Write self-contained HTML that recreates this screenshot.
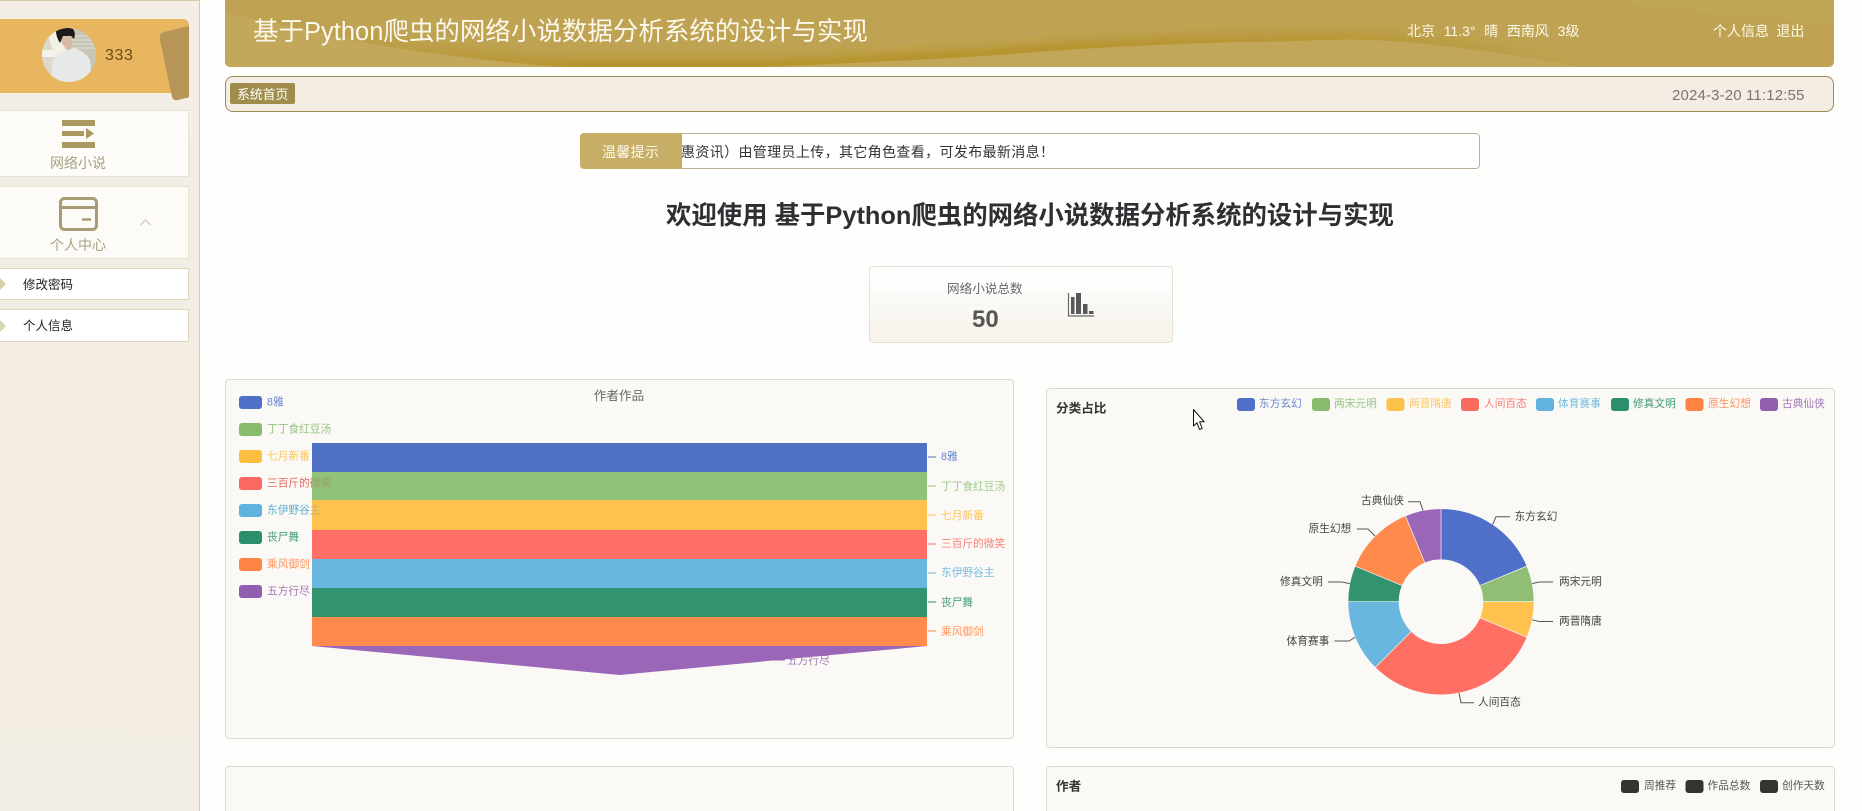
<!DOCTYPE html>
<html lang="zh-CN">
<head>
<meta charset="utf-8">
<title>基于Python爬虫的网络小说数据分析系统的设计与实现</title>
<style>
html,body{margin:0;padding:0;width:1862px;height:811px;overflow:hidden;background:#fefefd;font-family:"Liberation Sans","Noto Sans CJK SC",sans-serif;}
#root{position:relative;width:1862px;height:811px;overflow:hidden;}
.a{position:absolute;box-sizing:border-box;}
.t{position:absolute;white-space:nowrap;line-height:1;}
svg{position:absolute;left:0;top:0;}
svg text{font-family:"Liberation Sans","Noto Sans CJK SC",sans-serif;}
</style>
</head>
<body>
<div id="root">

<!-- sidebar -->
<div class="a" style="left:0;top:0;width:200px;height:811px;background:linear-gradient(180deg,#f3efe7 0%,#f3ede2 50%,#f3ede2 85%,#f2ede5 100%);border-right:1.5px solid #d8cba6;border-top:1px solid #d8cba6;"></div>
<div class="a" style="left:0;top:19px;width:189px;height:74px;background:#e8b65f;border-radius:0 6px 0 0;"></div>
<svg width="200" height="110" viewBox="0 0 200 110" style="z-index:2">
  <path d="M160 36Q160 33 164 32L189 26V96Q189 98 186 98L178 100Q173 101 172 97L160 40Z" fill="#b69557"/>
  <defs><clipPath id="av"><circle cx="69" cy="55" r="27"/></clipPath></defs>
  <g clip-path="url(#av)">
    <rect x="42" y="28" width="54" height="54" fill="#c7c6b6"/>
    <path d="M70 36H96M70 40H96M70 44H96M74 48H96" stroke="#d9d8cc" stroke-width="1.500"/>
    <rect x="42" y="28" width="18" height="54" fill="#ddd8c8"/>
    <rect x="42" y="50" width="16" height="7" fill="#f6f4ea"/>
    <path d="M48 36L60 28L66 50L58 66Z" fill="#f3f0e6"/>
    <path d="M50 82L53 60Q56 54 66 50L74 48Q86 52 90 60L92 82Z" fill="#e6e9e7"/>
    <path d="M60 38L72 37Q73 46 69 50Q63 48 60 38Z" fill="#d9b8a4"/>
    <path d="M56 31Q64 26 73 29Q76 33 74 39L71 36L63 36L60 43Q56 37 56 31Z" fill="#1c1a1a"/>
  </g>
</svg>
<div class="t" style="left:105px;top:48px;font-size:16px;color:#6b4a1c;letter-spacing:.6px;z-index:3;">333</div>

<div class="a" style="left:0;top:110px;width:189px;height:67px;background:#fdfcf9;border:1px solid #e8e2cf;border-left:0;"></div>
<div class="a" style="left:62px;top:120px;width:33px;height:5.5px;background:#ab9a5f;"></div>
<div class="a" style="left:62px;top:131px;width:22px;height:5px;background:#ab9a5f;"></div>
<div class="a" style="left:62px;top:142px;width:33px;height:5.5px;background:#ab9a5f;"></div>
<svg width="200" height="350" viewBox="0 0 200 350" style="z-index:2">
  <polygon points="86,128 94,133.500 86,139" fill="#ab9a5f"/>
</svg>
<div class="t" style="left:50px;top:156px;font-size:14px;color:#a9a184;">网络小说</div>

<div class="a" style="left:0;top:186px;width:189px;height:73px;background:#fcfbf7;border:1px solid #e8e2cf;border-left:0;"></div>
<svg width="200" height="350" viewBox="0 0 200 350" style="z-index:2">
  <rect x="60.500" y="198.500" width="36" height="31" rx="4" fill="none" stroke="#a89c72" stroke-width="3"/>
  <path d="M60 207.500H97" stroke="#a89c72" stroke-width="3"/>
  <path d="M82 219.500H91" stroke="#a89c72" stroke-width="2.500"/>
  <path d="M140.500 225L145.500 220L150.500 225" fill="none" stroke="#c9c2a8" stroke-width="1"/>
</svg>
<div class="t" style="left:50px;top:238px;font-size:14px;color:#a9a184;">个人中心</div>

<div class="a" style="left:0;top:268px;width:189px;height:32px;background:#fff;border:1px solid #ddd5bc;border-left:0;"></div>
<div class="a" style="left:0;top:309px;width:189px;height:33px;background:#fff;border:1px solid #ddd5bc;border-left:0;"></div>
<svg width="200" height="350" viewBox="0 0 200 350" style="z-index:2">
  <polygon points="0,278 6,284 0,290" fill="#d8cfa8"/>
  <polygon points="0,320 6,326 0,332" fill="#d8d6b0"/>
</svg>
<div class="t" style="left:23px;top:279px;font-size:12.5px;color:#222;">修改密码</div>
<div class="t" style="left:23px;top:320px;font-size:12.5px;color:#222;">个人信息</div>

<!-- header -->
<svg width="1862" height="70" viewBox="0 0 1862 70" style="z-index:1">
  <defs>
    <clipPath id="hd"><path d="M225 0H1834V61Q1834 67 1828 67H231Q225 67 225 61Z"/></clipPath>
    <clipPath id="up"><path d="M225 0V13C290 26 340 38 378 45C430 54 500 62 562 67H760C860 63 960 58 1025 53C1100 47 1200 42 1286 41.500C1320 40 1350 39 1365 40C1410 40 1500 52 1579 67H1834V0Z"/></clipPath>
    <filter id="bl" x="-5%" y="-100%" width="110%" height="300%"><feGaussianBlur stdDeviation="6"/></filter>
    <linearGradient id="sw" gradientUnits="userSpaceOnUse" x1="225" y1="0" x2="1600" y2="0">
      <stop offset="0" stop-color="#b28d1e" stop-opacity="0"/>
      <stop offset=".1" stop-color="#b28d1e" stop-opacity=".25"/>
      <stop offset=".27" stop-color="#b28d1e" stop-opacity="1"/>
      <stop offset=".62" stop-color="#b28d1e" stop-opacity="1"/>
      <stop offset=".85" stop-color="#b28d1e" stop-opacity=".6"/>
      <stop offset=".98" stop-color="#b28d1e" stop-opacity=".1"/>
      <stop offset="1" stop-color="#b28d1e" stop-opacity="0"/>
    </linearGradient>
  </defs>
  <g clip-path="url(#hd)">
    <rect x="225" y="0" width="1609" height="67" fill="#bfa353"/>
    <path d="M225 67V13C290 26 340 38 378 45C430 54 500 62 562 67Z" fill="#c3a85b"/>
    <path d="M760 67C860 63 960 58 1025 53C1100 47 1200 42 1286 41.500C1320 40 1350 39 1365 40C1410 40 1500 52 1579 67Z" fill="#c2a75b"/>
    <g clip-path="url(#up)">
      <path d="M225 13C290 26 340 38 378 45C430 54 500 62 562 67H760C860 63 960 58 1025 53C1100 47 1200 42 1286 41.500C1320 40 1350 39 1365 40C1410 40 1500 52 1579 67" fill="none" stroke="url(#sw)" stroke-width="12" filter="url(#bl)"/>
    </g>
    <path d="M1610 0C1680 12 1760 16 1834 24V0Z" fill="#c0a658" opacity=".6"/>
  </g>
</svg>
<div class="t" style="left:253px;top:20px;font-size:25.5px;color:#fbf8ee;z-index:2;">基于Python爬虫的网络小说数据分析系统的设计与实现</div>
<div class="t" style="left:1407px;top:24px;font-size:14px;color:#fdf9ea;z-index:2;word-spacing:4.8px;">北京 11.3° 晴 西南风 3级</div>
<div class="t" style="left:1713px;top:24px;font-size:14px;color:#fdf9ea;z-index:2;word-spacing:3.5px;">个人信息 退出</div>

<!-- breadcrumb -->
<div class="a" style="left:225px;top:76px;width:1609px;height:36px;background:#f3ede4;border:1px solid #9c8a55;border-radius:8px;"></div>
<div class="a" style="left:230px;top:83px;width:65px;height:21px;background:#a08c4b;border-radius:2px;"></div>
<div class="t" style="left:237px;top:88px;font-size:13px;color:#fff;letter-spacing:-.2px;">系统首页</div>
<div class="t" style="left:1672px;top:88px;font-size:15px;color:#7a7570;letter-spacing:.15px;">2024-3-20 11:12:55</div>

<!-- notice -->
<div class="a" style="left:675px;top:133px;width:805px;height:36px;background:#fff;border:1px solid #bdb193;border-radius:4px;"></div>
<div class="a" style="left:580px;top:133px;width:102px;height:36px;background:#c7ae66;border-radius:4px 0 0 4px;"></div>
<div class="t" style="left:602px;top:145px;font-size:14px;color:#fdf9ee;letter-spacing:.3px;">温馨提示</div>
<div class="t" style="left:681px;top:145px;font-size:14px;color:#333;letter-spacing:.36px;">惠资讯）由管理员上传，其它角色查看，可发布最新消息！</div>

<!-- heading -->
<div class="t" style="left:666px;top:204px;font-size:25.4px;font-weight:700;color:#2d2f33;">欢迎使用 基于Python爬虫的网络小说数据分析系统的设计与实现</div>

<!-- stat card -->
<div class="a" style="left:869px;top:266px;width:304px;height:77px;border:1px solid #e6e1d6;border-radius:4px;background:linear-gradient(180deg,#ffffff 0%,#fefefd 25%,#fbf9f6 40%,#faf8f4 60%,#f8f3eb 78%,#f8f3eb 100%);"></div>
<div class="t" style="left:947px;top:283px;font-size:12.6px;color:#666;">网络小说总数</div>
<div class="t" style="left:972px;top:308px;font-size:24px;font-weight:700;color:#555;">50</div>

<!-- chart cards -->
<div class="a" style="left:225px;top:379px;width:789px;height:360px;background:#faf9f5;border:1px solid #dcdad3;border-radius:4px;"></div>
<div class="a" style="left:1046px;top:388px;width:789px;height:360px;background:#faf9f5;border:1px solid #dcdad3;border-radius:4px;"></div>
<div class="a" style="left:225px;top:766px;width:789px;height:60px;background:#faf9f5;border:1px solid #dcdad3;border-radius:4px;"></div>
<div class="a" style="left:1046px;top:766px;width:789px;height:60px;background:#faf9f5;border:1px solid #dcdad3;border-radius:4px;"></div>

<svg width="1862" height="811" viewBox="0 0 1862 811" style="z-index:2">
  <!-- stat icon -->
  <path d="M1068.500 293V316H1094" fill="none" stroke="#6a6a6a" stroke-width="1.200"/>
  <rect x="1071" y="297" width="3.500" height="17" fill="#56585a"/>
  <rect x="1076" y="293" width="5" height="21" fill="#56585a"/>
  <rect x="1083" y="304" width="4.500" height="10" fill="#56585a"/>
  <rect x="1089" y="311" width="4.500" height="3" fill="#56585a"/>

  <!-- funnel legend -->
  <rect x="239" y="396" width="23" height="13" rx="3" fill="#4f6fc9"/>
  <rect x="239" y="423" width="23" height="13" rx="3" fill="#87bb6e"/>
  <rect x="239" y="450" width="23" height="13" rx="3" fill="#fdbd41"/>
  <rect x="239" y="477" width="23" height="13" rx="3" fill="#fa6a60"/>
  <rect x="239" y="504" width="23" height="13" rx="3" fill="#5fb3dd"/>
  <rect x="239" y="531" width="23" height="13" rx="3" fill="#2a8f6a"/>
  <rect x="239" y="558" width="23" height="13" rx="3" fill="#ff8444"/>
  <rect x="239" y="585" width="23" height="13" rx="3" fill="#925fb0"/>
  <g font-size="10.7" opacity=".85">
    <text x="267" y="405.500" fill="#4f6fc9">8雅</text>
    <text x="267" y="432.500" fill="#87bb6e">丁丁食红豆汤</text>
    <text x="267" y="459.500" fill="#fdbd41">七月新番</text>
    <text x="267" y="486.500" fill="#fa6a60">三百斤的微笑</text>
    <text x="267" y="513.500" fill="#5fb3dd">东伊野谷主</text>
    <text x="267" y="540.500" fill="#2a8f6a">丧尸舞</text>
    <text x="267" y="567.500" fill="#ff8444">乘风御剑</text>
    <text x="267" y="594.500" fill="#925fb0">五方行尽</text>
  </g>
  <text x="787" y="664" font-size="10.7" fill="#9268ac" opacity=".85">五方行尽</text>
  <path d="M770 660H785" stroke="#9c67b8" stroke-width="1"/>
  <!-- funnel -->
  <rect x="312" y="443" width="615" height="29" fill="#5171c7"/>
  <rect x="312" y="472" width="615" height="28" fill="#91c27a"/>
  <rect x="312" y="500" width="615" height="30" fill="#ffc24f"/>
  <rect x="312" y="530" width="615" height="29" fill="#ff6f67"/>
  <rect x="312" y="559" width="615" height="29" fill="#69b6de"/>
  <rect x="312" y="588" width="615" height="29" fill="#32946f"/>
  <rect x="312" y="617" width="615" height="29" fill="#ff8a4e"/>
  <polygon points="312,646 927,646 619.500,675" fill="#9c66b8"/>
  <g font-size="10.7" opacity=".3">
    <text x="267" y="486.500" fill="#a84f46">三百斤的微笑</text>
    <text x="267" y="513.500" fill="#3f8fb8">东伊野谷主</text>
  </g>
  <g stroke-width="1" fill="none">
    <path d="M928 457H936" stroke="#5171c7"/><path d="M928 486H936" stroke="#91c27a"/><path d="M928 515H936" stroke="#ffc24f"/><path d="M928 544H936" stroke="#ff6f67"/><path d="M928 573H936" stroke="#69b6de"/><path d="M928 602H936" stroke="#32946f"/><path d="M928 631H936" stroke="#ff8a4e"/>
  </g>
  <g font-size="10.7" opacity=".85">
    <text x="941" y="460" fill="#4f6fc8">8雅</text>
    <text x="941" y="490" fill="#91c27a">丁丁食红豆汤</text>
    <text x="941" y="519" fill="#ffb840">七月新番</text>
    <text x="941" y="547" fill="#fa6a60">三百斤的微笑</text>
    <text x="941" y="576" fill="#5fb3dd">东伊野谷主</text>
    <text x="941" y="606" fill="#2a8f6a">丧尸舞</text>
    <text x="941" y="635" fill="#ff8444">乘风御剑</text>
  </g>
  <text x="619" y="400" font-size="12.600" fill="#666" text-anchor="middle">作者作品</text>

  <!-- pie chart -->
  <text x="1056" y="412.500" font-size="12.600" font-weight="700" fill="#333">分类占比</text>
  <g font-size="10.7">
    <rect x="1237" y="398" width="18" height="13" rx="3" fill="#4f6fc9"/><text x="1259" y="407" fill="#6f88d0">东方玄幻</text>
    <rect x="1312" y="398" width="18" height="13" rx="3" fill="#87bb6e"/><text x="1334" y="407" fill="#98c484">两宋元明</text>
    <rect x="1386.500" y="398" width="18" height="13" rx="3" fill="#fdc24c"/><text x="1409" y="407" fill="#fdc664">两晋隋唐</text>
    <rect x="1461" y="398" width="18" height="13" rx="3" fill="#fa6a60"/><text x="1484" y="407" fill="#f97e76">人间百态</text>
    <rect x="1536" y="398" width="18" height="13" rx="3" fill="#5fb3dd"/><text x="1558" y="407" fill="#72bbdf">体育赛事</text>
    <rect x="1611" y="398" width="18" height="13" rx="3" fill="#2a8f6a"/><text x="1633" y="407" fill="#3f9a78">修真文明</text>
    <rect x="1685.500" y="398" width="18" height="13" rx="3" fill="#ff8444"/><text x="1708" y="407" fill="#fc9160">原生幻想</text>
    <rect x="1760" y="398" width="18" height="13" rx="3" fill="#925fb0"/><text x="1782" y="407" fill="#a078ba">古典仙侠</text>
  </g>
  <g transform="translate(1441 601.700)" stroke="#faf9f5" stroke-width=".6">
    <path d="M0-93A93 93 0 0 1 85.900-35.600L38.800-16.100A42 42 0 0 0 0-42Z" fill="#4f6fc8"/>
    <path d="M85.900-35.600A93 93 0 0 1 93 0H42A42 42 0 0 0 38.800-16.100Z" fill="#8fbe74"/>
    <path d="M93 0A93 93 0 0 1 85.900 35.600L38.800 16.100A42 42 0 0 0 42 0Z" fill="#ffc24f"/>
    <path d="M85.900 35.600A93 93 0 0 1-65.800 65.800L-29.700 29.700A42 42 0 0 0 38.800 16.100Z" fill="#ff6f64"/>
    <path d="M-65.800 65.800A93 93 0 0 1-93 0H-42A42 42 0 0 0-29.700 29.700Z" fill="#69b6de"/>
    <path d="M-93 0A93 93 0 0 1-85.900-35.600L-38.800-16.100A42 42 0 0 0-42 0Z" fill="#32946f"/>
    <path d="M-85.900-35.600A93 93 0 0 1-35.600-85.900L-16.100-38.800A42 42 0 0 0-38.800-16.100Z" fill="#ff8a4e"/>
    <path d="M-35.600-85.900A93 93 0 0 1 0-93V-42A42 42 0 0 0-16.100-38.800Z" fill="#9c66b8"/>
  </g>
  <g fill="none" stroke="#555" stroke-width="1">
    <path d="M1492.700 524.400L1496 516.700H1510"/>
    <path d="M1532.200 583.600L1539 582H1553"/>
    <path d="M1532.200 619.800L1539 621.500H1553"/>
    <path d="M1459 693L1461 702.700H1474"/>
    <path d="M1355 637.300L1349 641H1334.500"/>
    <path d="M1349.800 583.600L1342 582H1328"/>
    <path d="M1375 536L1368 529H1357"/>
    <path d="M1423 510.500L1420 501.700H1408"/>
  </g>
  <g font-size="10.7" fill="#444">
    <text x="1514.600" y="520">东方玄幻</text>
    <text x="1559" y="585">两宋元明</text>
    <text x="1559" y="624.700">两晋隋唐</text>
    <text x="1478" y="705.700">人间百态</text>
    <text x="1286.500" y="644.700">体育赛事</text>
    <text x="1280" y="585">修真文明</text>
    <text x="1308.500" y="532">原生幻想</text>
    <text x="1361" y="504">古典仙侠</text>
  </g>

  <!-- author legend -->
  <text x="1056" y="790.500" font-size="12.600" font-weight="700" fill="#333">作者</text>
  <g font-size="10.7" fill="#555">
    <rect x="1621" y="780" width="18" height="13" rx="3" fill="#333330"/><text x="1644" y="789">周推荐</text>
    <rect x="1685.500" y="780" width="18" height="13" rx="3" fill="#333330"/><text x="1707.500" y="789">作品总数</text>
    <rect x="1760" y="780" width="18" height="13" rx="3" fill="#333330"/><text x="1782" y="789">创作天数</text>
  </g>

  <!-- cursor -->
  <path d="M1193.500 409.500V426L1197 422.800L1199.600 429.500L1202.200 428.400L1199.600 421.800H1204.200Z" fill="#fff" stroke="#111" stroke-width="1" stroke-linejoin="round"/>
</svg>
</div>
</body>
</html>
